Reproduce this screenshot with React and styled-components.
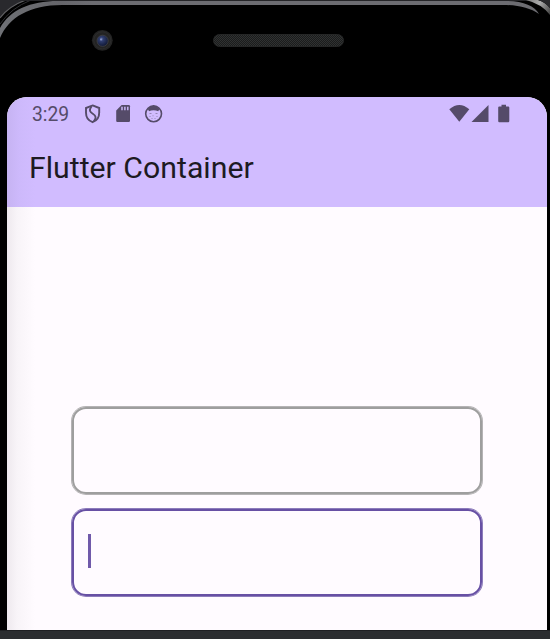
import React from "react";
import styled, { createGlobalStyle } from "styled-components";

const GlobalStyle = createGlobalStyle`
  * { box-sizing: border-box; }
  body { margin: 0; background: #000; overflow: hidden; }
`;

const Device = styled.div`
  display: flex;
  flex-direction: column;
  width: 550px;
  height: 639px;
  background: #000;
  font-family: Roboto, sans-serif;
`;

const Frame = styled.svg`
  display: block;
`;

const Bezel = styled.div`
  height: 97px;
  flex: none;
`;

const Screen = styled.main`
  display: flex;
  flex-direction: column;
  width: 540px;
  height: 533px;
  margin-left: 7px;
  overflow: hidden;
  border-radius: 20px 20px 0 0;
  background: linear-gradient(90deg, #eee9ee 0, #f8f4f8 10px, #fffbff 28px);
`;

const AppBar = styled.header`
  height: 110px;
  background: linear-gradient(90deg, #c6b3f2 0, #cdb9fb 12px, #d1bcff 28px);
`;

const StatusBar = styled.div`
  display: flex;
  justify-content: space-between;
  height: 34px;
  padding: 0 37.5px 0 25px;
  color: #554b69;
`;

const StatusGroup = styled.div`
  display: flex;
  align-items: center;
`;

const Clock = styled.span`
  width: 53px;
  font-size: 19.3px;
  line-height: 34px;
  padding-top: 1px;
`;

const Icon = styled.svg`
  display: block;
  flex: none;
  margin-right: ${(p) => p.$gap || 0}px;
`;

const Title = styled.h1`
  margin: 0;
  padding: 17px 0 0 22px;
  font-size: 30.25px;
  font-weight: 400;
  line-height: 40px;
  color: #1d1a22;
`;

const Form = styled.section`
  display: flex;
  flex-direction: column;
  gap: 15px;
  padding: 200px 65px 0 65px;
`;

const Field = styled.div`
  display: flex;
  align-items: center;
  height: 87px;
  padding-left: 14px;
  border: 2px solid ${(p) => (p.$focused ? "#6750a4" : "#9e9e9e")};
  border-radius: 14px;
  box-shadow: 0 0 0 1px ${(p) => (p.$focused ? "#8d7cbb" : "#b5b3b5")};
`;

const Caret = styled.span`
  width: 3px;
  height: 34px;
  margin-top: -3px;
  background: #705aaa;
`;

const Dock = styled.footer`
  height: 9px;
  border-top: 1px solid #1e1f22;
  background: #2b2d30;
`;

function BezelArt() {
  return (
    <Frame width="550" height="97" viewBox="0 0 550 97">
      <defs>
        <linearGradient id="rim" x1="0" y1="40" x2="90" y2="0" gradientUnits="userSpaceOnUse">
          <stop stopColor="#707277" />
          <stop offset=".7" stopColor="#65656a" />
          <stop offset="1" stopColor="#6c6c71" />
        </linearGradient>
        <linearGradient id="edge" x1="525" y1="0" x2="550" y2="14" gradientUnits="userSpaceOnUse">
          <stop stopColor="#777" />
          <stop offset=".5" stopColor="#aaa" />
          <stop offset="1" stopColor="#444" />
        </linearGradient>
        <radialGradient id="lens" cx=".4" cy=".35" r=".6">
          <stop stopColor="#6a78ad" />
          <stop offset=".3" stopColor="#303e70" />
          <stop offset="1" stopColor="#141c3b" />
        </radialGradient>
        <pattern id="mesh" width="2" height="2" patternUnits="userSpaceOnUse">
          <rect width="2" height="2" fill="#1b1c1c" />
          <path d="M0 0h1v1H0zM1 1h1v1H1z" fill="#303232" />
        </pattern>
      </defs>
      <path d="M0 0H26Q9 6 0 18Z" fill="#29292d" />
      <path d="M0 18Q9 6 26 0" fill="none" stroke="#606063" strokeWidth="1.2" />
      <path d="M0 24Q11 8 31 0" fill="none" stroke="#303033" strokeWidth="1" />
      <path d="M20 0H530V1H20Z" fill="#252528" />
      <path d="M0 28C10 10 30 1 58 1H507C523 1 535 6 539 14C530 8 519 5 503 5H62C30 5 9 17 0 38Z" fill="url(#rim)" />
      <path d="M526 0Q542 4 550 15V8Q545 2 538 0Z" fill="url(#edge)" />
      <path d="M538 0Q545 2 550 8V0Z" fill="#29292c" />
      <circle cx="102.3" cy="40.3" r="10.4" fill="#232323" />
      <circle cx="102.3" cy="40.3" r="8.5" fill="none" stroke="#2c2c2c" />
      <circle cx="102.6" cy="40.8" r="5.6" fill="url(#lens)" stroke="#454547" strokeWidth=".7" />
      <circle cx="101" cy="39.5" r=".9" fill="#8b97c5" />
      <rect x="213.5" y="34.5" width="130" height="12" rx="6" fill="url(#mesh)" stroke="#252626" />
    </Frame>
  );
}

const ShieldIcon = () => (
  <Icon width="16" height="20" viewBox="0 0 16 20" $gap={15} fill="none" stroke="#554b69" strokeWidth="1.9">
    <path d="M7.6 1.4L14.2 4V8.8C14.2 13.4 11.7 16.8 7.6 18.2C3.5 16.8 1 13.4 1 8.8V4Z" />
    <path d="M6.6 2.2C3.7 6.2 4.8 8 7.8 9.8C11.3 11.9 11.4 14 8.8 17.4" />
  </Icon>
);

const SdIcon = () => (
  <Icon width="15" height="20" viewBox="0 0 15 20" $gap={13}>
    <path d="M5.6 1H12.8Q14 1 14 2.2V16.8Q14 18 12.8 18H1.4Q.2 18 .2 16.8V6.5Z" fill="#554b69" />
    <path d="M6 2.7V6.3M8.9 2.7V6.3M11.8 2.7V6.3" stroke="#d1bcff" strokeWidth="1.4" />
  </Icon>
);

const FaceIcon = () => (
  <Icon width="19" height="20" viewBox="0 0 19 20">
    <circle cx="9.6" cy="9.8" r="7.9" fill="none" stroke="#554b69" strokeWidth="1.6" />
    <path d="M3.7 4.8Q9.6-1.2 15.5 4.8L14.3 7.2Q12 6.2 9.6 6.2Q7 6.2 5 7.2Z" fill="#554b69" />
    <path d="M5.5 9.5h2M11.5 9.5h2M5.5 12.5h1M8.5 11.8h1M12.5 12.5h1M7.5 14.5h1M10.5 14.5h1" stroke="#8f7fae" strokeWidth=".9" />
  </Icon>
);

export default function App() {
  return (
    <>
      <GlobalStyle />
      <Device>
        <Bezel>
          <BezelArt />
        </Bezel>
        <Screen>
          <AppBar>
            <StatusBar>
              <StatusGroup>
                <Clock>3:29</Clock>
                <ShieldIcon />
                <SdIcon />
                <FaceIcon />
              </StatusGroup>
              <StatusGroup>
                <Icon width="21" height="20" viewBox="0 0 21 20" $gap={1}>
                  <path d="M.3 5.2Q10.3-3.4 20.3 5.2L10.3 17.8Z" fill="currentColor" />
                </Icon>
                <Icon width="18" height="20" viewBox="0 0 18 20" $gap={9}>
                  <path d="M17.5 1V18H.5Z" fill="currentColor" />
                </Icon>
                <Icon width="12" height="20" viewBox="0 0 12 20">
                  <path d="M3.5 .8H8V2.4H10.2Q11.3 2.4 11.3 3.5V17.1Q11.3 18.3 10.2 18.3H1.3Q.2 18.3 .2 17.1V3.5Q.2 2.4 1.3 2.4H3.5Z" fill="currentColor" />
                </Icon>
              </StatusGroup>
            </StatusBar>
            <Title>Flutter Container</Title>
          </AppBar>
          <Form>
            <Field />
            <Field $focused>
              <Caret />
            </Field>
          </Form>
        </Screen>
        <Dock />
      </Device>
    </>
  );
}
